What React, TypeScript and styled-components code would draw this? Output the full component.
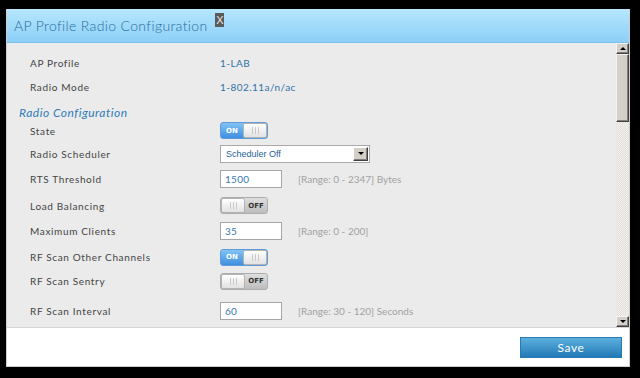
import React from "react";
import styled, { createGlobalStyle } from "styled-components";

const GlobalStyle = createGlobalStyle`
  html, body { margin: 0; padding: 0; background: #000; }
  body { font-family: Lato, "Liberation Sans", sans-serif; }
  * { box-sizing: border-box; }
`;

const Page = styled.div`
  width: 640px;
  height: 378px;
  padding: 9px 10px 11px 6px;
  background: #000;
`;

const Dialog = styled.div`
  width: 624px;
  height: 358px;
  display: flex;
  flex-direction: column;
  background: #fff;
  border: 1px solid #cfcfcf;
  border-top: none;
`;

const Header = styled.div`
  height: 34px;
  flex: none;
  display: flex;
  align-items: center;
  padding-left: 7px;
  background: linear-gradient(#b6e7fd, #8ccff8);
  border-bottom: 1px solid #7cbfe8;
`;

const Title = styled.h1`
  margin: 0;
  font: 300 14px Lato, "Liberation Sans", sans-serif;
  letter-spacing: 0.35px;
  color: #2a6c9c;
`;

const Close = styled.span`
  align-self: flex-start;
  margin: 4px 0 0 8px;
  width: 9px;
  height: 14px;
  background: #5a5a5a;
  color: #e8e8e8;
  font: 11px "Liberation Sans", sans-serif;
  line-height: 14px;
  text-align: center;
`;

const Body = styled.div`
  flex: 1;
  min-height: 0;
  display: flex;
`;

const Content = styled.div`
  flex: 1;
  background: #ebebeb;
  overflow: hidden;
  padding: 8px 0 0 23px;
`;

const Row = styled.div<{ $h: number }>`
  height: ${(p) => p.$h}px;
  display: grid;
  grid-template-columns: 190px 1fr;
  align-items: center;
`;

const Label = styled.span`
  font-size: 10px;
  letter-spacing: 0.65px;
  color: #444;
`;

const Value = styled.span`
  font-size: 10px;
  letter-spacing: 0.45px;
  color: #2f72a8;
`;

const Cell = styled.div`
  display: flex;
  align-items: center;
  gap: 16px;
`;

const Heading = styled.h2`
  margin: 0 0 0 -11px;
  height: 21px;
  padding-top: 7px;
  font: italic 12px Lato, "Liberation Sans", sans-serif;
  letter-spacing: 0.5px;
  line-height: 14px;
  color: #2f7cba;
`;

const Toggle = styled.div<{ $on: boolean }>`
  width: 48px;
  height: 17px;
  border-radius: 3px;
  display: flex;
  align-items: center;
  flex-direction: ${(p) => (p.$on ? "row" : "row-reverse")};
  border: 1px solid ${(p) => (p.$on ? "#5e9bd8" : "#adadad")};
  background: ${(p) =>
    p.$on
      ? "linear-gradient(#82c3f5, #3f8fe0)"
      : "linear-gradient(#dedede, #bdbdbd)"};
`;

const ToggleText = styled.span<{ $on: boolean }>`
  flex: 1;
  text-align: center;
  font: bold 7px "DejaVu Sans", sans-serif;
  color: ${(p) => (p.$on ? "#fff" : "#333")};
`;

const Knob = styled.span`
  width: 24px;
  height: 15px;
  border-radius: 2px;
  border: 1px solid #b4b4b4;
  background: linear-gradient(#ffffff, #e2e2e2);
  display: flex;
  align-items: center;
  justify-content: center;
`;

const Grip = styled.span`
  width: 7px;
  height: 7px;
  background: repeating-linear-gradient(90deg, #c9c9c9 0 1px, transparent 1px 3px);
`;

const Select = styled.div`
  width: 150px;
  height: 18px;
  border: 1px solid #a9a9a9;
  background: #fff;
  display: flex;
  align-items: center;
  justify-content: space-between;
  padding: 0 1px 0 5px;
  font: 9px "Liberation Sans", Arial, sans-serif;
  color: #1f5f94;
`;

const DropBtn = styled.span`
  width: 15px;
  height: 14px;
  background: #d4d0c8;
  border: 1px solid;
  border-color: #fff #404040 #404040 #fff;
  box-shadow: inset -1px -1px #808080;
  display: flex;
  align-items: center;
  justify-content: center;
`;

const Arrow = styled.span<{ $up?: boolean }>`
  width: 0;
  height: 0;
  border-left: 3px solid transparent;
  border-right: 3px solid transparent;
  ${(p) =>
    p.$up ? "border-bottom: 3px solid #000;" : "border-top: 3px solid #000;"}
`;

const Input = styled.div`
  width: 62px;
  height: 18px;
  border: 1px solid #a6a6a6;
  background: #fff;
  padding-left: 4px;
  display: flex;
  align-items: center;
  font-size: 10px;
  letter-spacing: 0.3px;
  color: #3579b4;
`;

const Hint = styled.span`
  font-size: 10px;
  color: #a2a2a2;
`;

const ScrollBar = styled.div`
  width: 13px;
  flex: none;
  display: flex;
  flex-direction: column;
  background: repeating-conic-gradient(#f3f2ef 0 25%, #e2dfda 0 50%) 0 0 / 2px 2px;
`;

const ScrollBtn = styled.div`
  height: 11px;
  flex: none;
  background: #d4d0c8;
  border: 1px solid;
  border-color: #f4f4f4 #404040 #404040 #f4f4f4;
  box-shadow: inset -1px -1px #808080;
  display: flex;
  align-items: center;
  justify-content: center;
`;

const Thumb = styled.div`
  height: 68px;
  flex: none;
  background: #d4d0c8;
  border: 1px solid;
  border-color: #f4f4f4 #404040 #404040 #f4f4f4;
  box-shadow: inset -1px -1px #808080;
`;

const Track = styled.div`
  flex: 1;
`;

const Footer = styled.div`
  height: 39px;
  flex: none;
  border-top: 1px solid #d6d6d6;
  display: flex;
  align-items: center;
  justify-content: flex-end;
  padding-right: 7px;
`;

const SaveButton = styled.button`
  width: 102px;
  height: 21px;
  border: 1px solid #2a7ab2;
  background: linear-gradient(#5cb0de, #2379b6);
  color: #fff;
  font: 12px Lato, "Liberation Sans", sans-serif;
  letter-spacing: 0.6px;
  padding: 0;
`;

const Switch = ({ on }: { on: boolean }) => (
  <Toggle $on={on}>
    <ToggleText $on={on}>{on ? "ON" : "OFF"}</ToggleText>
    <Knob>
      <Grip />
    </Knob>
  </Toggle>
);

export default function App() {
  return (
    <Page>
      <GlobalStyle />
      <Dialog>
        <Header>
          <Title>AP Profile Radio Configuration</Title>
          <Close>X</Close>
        </Header>
        <Body>
          <Content>
            <Row $h={24}>
              <Label>AP Profile</Label>
              <Value>1-LAB</Value>
            </Row>
            <Row $h={24}>
              <Label>Radio Mode</Label>
              <Value>1-802.11a/n/ac</Value>
            </Row>
            <Heading>Radio Configuration</Heading>
            <Row $h={21}>
              <Label>State</Label>
              <Cell>
                <Switch on />
              </Cell>
            </Row>
            <Row $h={25}>
              <Label>Radio Scheduler</Label>
              <Cell>
                <Select>
                  <span>Scheduler Off</span>
                  <DropBtn>
                    <Arrow />
                  </DropBtn>
                </Select>
              </Cell>
            </Row>
            <Row $h={26}>
              <Label>RTS Threshold</Label>
              <Cell>
                <Input>1500</Input>
                <Hint>[Range: 0 - 2347] Bytes</Hint>
              </Cell>
            </Row>
            <Row $h={27}>
              <Label>Load Balancing</Label>
              <Cell>
                <Switch on={false} />
              </Cell>
            </Row>
            <Row $h={23}>
              <Label>Maximum Clients</Label>
              <Cell>
                <Input>35</Input>
                <Hint>[Range: 0 - 200]</Hint>
              </Cell>
            </Row>
            <Row $h={30}>
              <Label>RF Scan Other Channels</Label>
              <Cell>
                <Switch on />
              </Cell>
            </Row>
            <Row $h={18}>
              <Label>RF Scan Sentry</Label>
              <Cell>
                <Switch on={false} />
              </Cell>
            </Row>
            <Row $h={42}>
              <Label>RF Scan Interval</Label>
              <Cell>
                <Input>60</Input>
                <Hint>[Range: 30 - 120] Seconds</Hint>
              </Cell>
            </Row>
          </Content>
          <ScrollBar>
            <ScrollBtn>
              <Arrow $up />
            </ScrollBtn>
            <Thumb />
            <Track />
            <ScrollBtn>
              <Arrow />
            </ScrollBtn>
          </ScrollBar>
        </Body>
        <Footer>
          <SaveButton>Save</SaveButton>
        </Footer>
      </Dialog>
    </Page>
  );
}
